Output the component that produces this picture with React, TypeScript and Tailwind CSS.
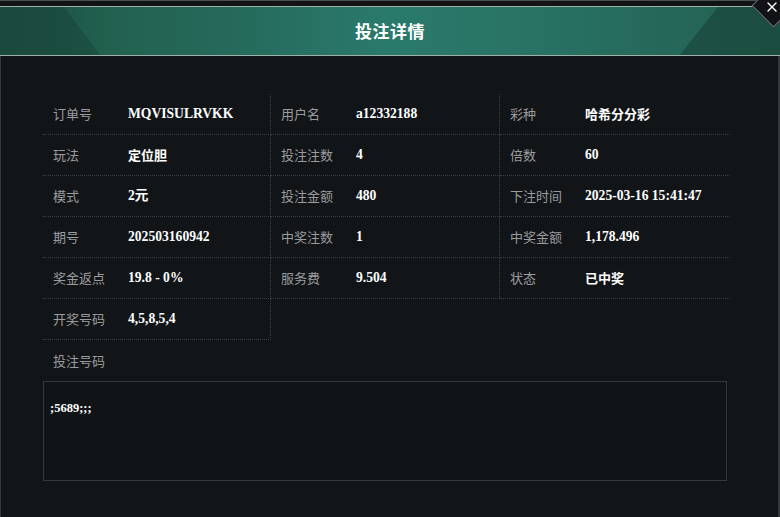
import { X } from 'lucide-react';

type Cell = { label: string; value: string; cjk?: boolean };

const cells: Cell[] = [
  { label: '订单号', value: 'MQVISULRVKK' },
  { label: '用户名', value: 'a12332188' },
  { label: '彩种', value: '哈希分分彩', cjk: true },
  { label: '玩法', value: '定位胆', cjk: true },
  { label: '投注注数', value: '4' },
  { label: '倍数', value: '60' },
  { label: '模式', value: '2元' },
  { label: '投注金额', value: '480' },
  { label: '下注时间', value: '2025-03-16 15:41:47' },
  { label: '期号', value: '202503160942' },
  { label: '中奖注数', value: '1' },
  { label: '中奖金额', value: '1,178.496' },
  { label: '奖金返点', value: '19.8 - 0%' },
  { label: '服务费', value: '9.504' },
  { label: '状态', value: '已中奖', cjk: true },
  { label: '开奖号码', value: '4,5,8,5,4' },
];

const sans = "font-['Noto_Sans_CJK_SC','Noto_Sans',sans-serif]";
const serif = "font-['Liberation_Serif','Noto_Sans_CJK_SC',serif]";

export default function App() {
  return (
    <div className={`relative w-[780px] h-[517px] overflow-hidden bg-[#121518] flex flex-col ${sans}`}>
      <div className="h-[6px] shrink-0 border-t border-[#4a4f52] bg-[#111315]" />
      <div className="relative h-[50px] shrink-0 border-y border-[#9fb0ab] bg-[linear-gradient(90deg,#1d5043_0%,#1f5649_8%,#22614f_14%,#256a5b_30%,#2a7a6c_50%,#287263_70%,#25685a_85%,#22604f_100%)] flex items-center justify-center">
        <div className="absolute inset-0 bg-[#163f35]/40 [clip-path:polygon(0_0,64px_0,100px_100%,0_100%)]" />
        <div className="absolute inset-0 bg-[#153a31]/50 [clip-path:polygon(718px_0,100%_0,100%_100%,680px_100%)]" />
        <span className="relative text-white text-[17px] font-bold tracking-[0.5px]">投注详情</span>
      </div>
      <div className="absolute right-[-9px] top-[-10px] w-[31px] h-[31px] rotate-45 bg-[#111316] border border-[#6a7073]" />
      <X className="absolute right-0 top-[-1px] w-[16px] h-[16px] text-white" strokeWidth={2} />

      <div className="flex-1 border-l border-r-2 border-[#34393c] pl-[42px] pt-[38px]">
        <div className="grid grid-cols-[228px_229px_230px] w-[687px]">
          {cells.map((c, i) => (
            <div
              key={c.label}
              className={`h-[41px] flex items-center border-b border-dotted border-[#3c4044] ${
                i % 3 !== 2 ? 'border-r' : ''
              }`}
            >
              <span className="w-[85px] shrink-0 pl-[10px] text-[13px] text-[#9a9c9e]">{c.label}</span>
              <span className={`text-white font-bold ${c.cjk ? 'text-[13px] ' + sans : 'text-[13.6px] ' + serif}`}>
                {c.value}
              </span>
            </div>
          ))}
        </div>
        <div className="h-[41px] flex items-center pl-[10px] text-[13px] text-[#9a9c9e]">投注号码</div>
        <div className="w-[684px] h-[100px] border border-[#34383b] bg-[#111417] px-[6px] pt-[11px]">
          <span className={`text-white text-[12.5px] font-bold ${serif}`}>;5689;;;</span>
        </div>
      </div>
    </div>
  );
}
